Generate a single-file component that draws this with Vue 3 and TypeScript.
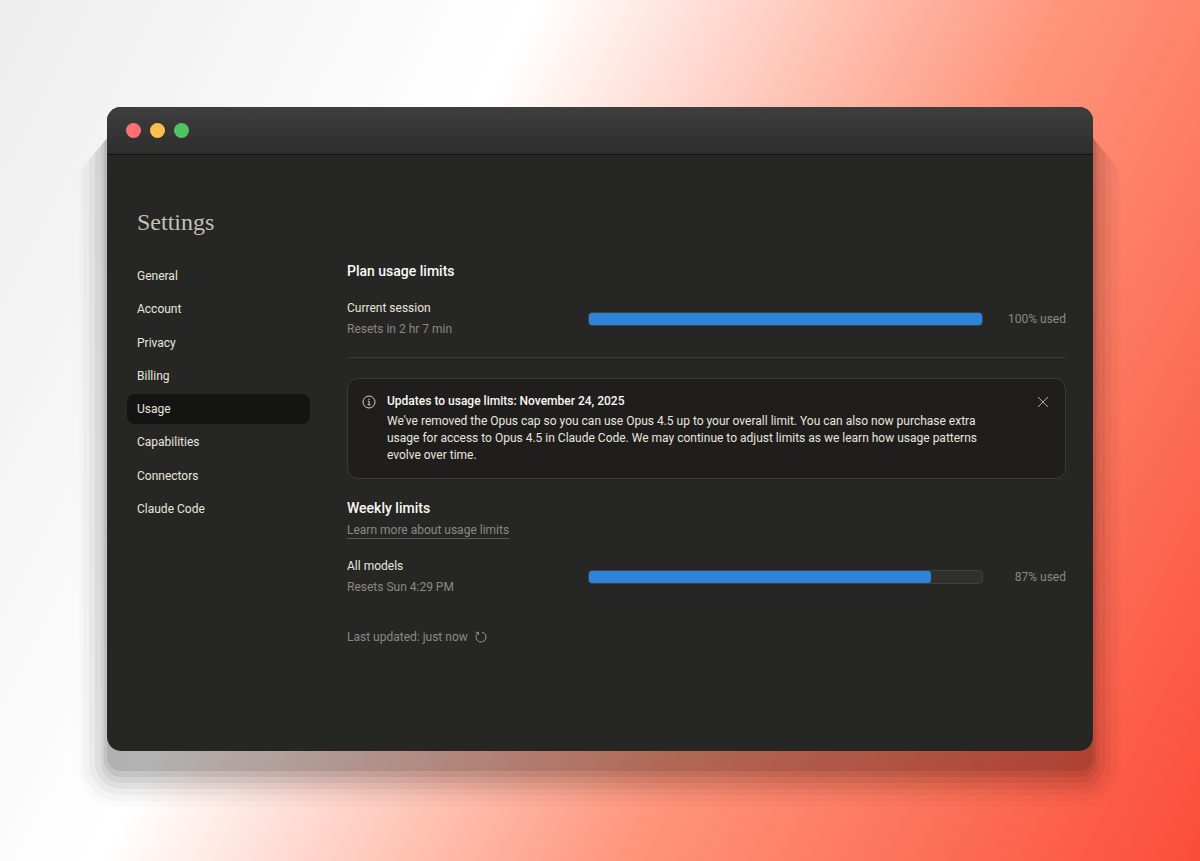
<script setup lang="ts">
import { ref } from 'vue'

interface Limit {
  name: string
  resets: string
  used: number
}

const sections = [
  'General',
  'Account',
  'Privacy',
  'Billing',
  'Usage',
  'Capabilities',
  'Connectors',
  'Claude Code',
]
const active = ref('Usage')
const noticeOpen = ref(true)

const session: Limit = { name: 'Current session', resets: 'Resets in 2 hr 7 min', used: 100 }
const weekly: Limit = { name: 'All models', resets: 'Resets Sun 4:29 PM', used: 87 }
</script>

<template>
  <div class="page">
    <div class="window">
      <header class="titlebar">
        <button class="dot close" type="button" aria-label="Close window"></button>
        <button class="dot minimize" type="button" aria-label="Minimize window"></button>
        <button class="dot expand" type="button" aria-label="Expand window"></button>
      </header>

      <div class="content">
        <h1>Settings</h1>
        <div class="columns">
          <nav class="nav" aria-label="Settings">
            <a
              v-for="section in sections"
              :key="section"
              href="#"
              :class="{ active: section === active }"
              :aria-current="section === active ? 'page' : undefined"
              @click.prevent="active = section"
              >{{ section }}</a
            >
          </nav>

          <main class="main">
            <h2>Plan usage limits</h2>
            <div class="limit">
              <div>
                <p class="name">{{ session.name }}</p>
                <p class="muted">{{ session.resets }}</p>
              </div>
              <div class="track" role="progressbar" :aria-label="session.name" :aria-valuenow="session.used">
                <div class="fill" :style="{ width: session.used + '%' }"></div>
              </div>
              <p class="muted amount">{{ session.used }}% used</p>
            </div>

            <hr />

            <section v-if="noticeOpen" class="notice">
              <svg class="info" viewBox="0 0 14 14" aria-hidden="true">
                <circle cx="7" cy="7" r="6" />
                <path d="M5.8 6.2H7.1V9.7M5.6 9.8H8.5" />
                <circle class="point" cx="7" cy="4.2" r="0.7" />
              </svg>
              <div class="notice-text">
                <h3>Updates to usage limits: November 24, 2025</h3>
                <p>
                  We've removed the Opus cap so you can use Opus 4.5 up to your overall limit. You can also now
                  purchase extra usage for access to Opus 4.5 in Claude Code. We may continue to adjust limits as we
                  learn how usage patterns evolve over time.
                </p>
              </div>
              <button class="dismiss" type="button" aria-label="Dismiss" @click="noticeOpen = false">
                <svg viewBox="0 0 12 12" aria-hidden="true"><path d="M1 1L11 11M11 1L1 11" /></svg>
              </button>
            </section>

            <h2>Weekly limits</h2>
            <p class="learn"><a href="#">Learn more about usage limits</a></p>
            <div class="limit weekly">
              <div>
                <p class="name">{{ weekly.name }}</p>
                <p class="muted">{{ weekly.resets }}</p>
              </div>
              <div class="track" role="progressbar" :aria-label="weekly.name" :aria-valuenow="weekly.used">
                <div class="fill" :style="{ width: weekly.used + '%' }"></div>
              </div>
              <p class="muted amount">{{ weekly.used }}% used</p>
            </div>

            <div class="updated">
              <span>Last updated: just now</span>
              <button class="refresh" type="button" aria-label="Refresh">
                <svg viewBox="0 0 12 12" aria-hidden="true">
                  <path d="M0.8 1.3H3.5V4" />
                  <path d="M3.3 1.8A5 5 0 1 0 7 1.1" />
                </svg>
              </button>
            </div>
          </main>
        </div>
      </div>
    </div>
  </div>
</template>

<style>
body {
  margin: 0;
}
</style>

<style scoped>
.page {
  box-sizing: border-box;
  min-height: 100vh;
  padding: 107px 107px 110px;
  isolation: isolate;
  background: linear-gradient(117deg, #ededed 0%, #ffffff 33%, #fe957b 65%, #fb4d39 100%);
  font-family: Roboto, 'Liberation Sans', sans-serif;
  font-size: 12px;
  line-height: 20px;
  color: #e8e6dc;
}

.window {
  position: relative;
  border-radius: 14px;
  background: #262624;
}

.window::before {
  content: '';
  position: absolute;
  z-index: -1;
  inset: 0;
  border-radius: 14px;
  box-shadow:
    0 20px 0 0 rgba(0, 0, 0, 0.09),
    0 23px 0 3px rgba(0, 0, 0, 0.07),
    0 26px 0 6px rgba(0, 0, 0, 0.055),
    0 26px 0 12px rgba(0, 0, 0, 0.05),
    0 26px 0 18px rgba(0, 0, 0, 0.035),
    0 26px 0 24px rgba(0, 0, 0, 0.025),
    0 28px 0 28px rgba(0, 0, 0, 0.015);
  clip-path: polygon(
    0 31px,
    -32px 70px,
    -32px 110%,
    calc(100% + 32px) 110%,
    calc(100% + 32px) 70px,
    100% 31px
  );
}

.titlebar {
  display: flex;
  align-items: center;
  gap: 9px;
  height: 47px;
  padding: 0 19px;
  border-bottom: 1px solid #141414;
  border-radius: 14px 14px 0 0;
  background: linear-gradient(#3e3e3e, #2d2d2d);
}

.dot {
  width: 15px;
  height: 15px;
  padding: 0;
  border: 0;
  border-radius: 50%;
}

.close {
  background: #ff7074;
}

.minimize {
  background: #ffbf4a;
}

.expand {
  background: #50c462;
}

.content {
  padding: 53px 27px 104px 20px;
}

h1,
h2,
h3,
p {
  margin: 0;
}

h1 {
  padding-left: 10px;
  font-family: 'Liberation Serif', serif;
  font-size: 24px;
  font-weight: 400;
  line-height: 28px;
  color: #c3c0b6;
}

.columns {
  display: grid;
  grid-template-columns: 183px minmax(0, 1fr);
  gap: 37px;
  align-items: start;
  margin-top: 25px;
}

.nav {
  display: flex;
  flex-direction: column;
  justify-content: space-between;
  height: 263px;
}

.nav a {
  padding: 5px 10px;
  border-radius: 8px;
  color: inherit;
  text-decoration: none;
}

.nav .active {
  background: #141413;
}

h2 {
  font-size: 14px;
  font-weight: 500;
  color: #faf9f5;
}

.limit {
  display: grid;
  grid-template-columns: 241px minmax(0, 1fr) 83px;
  align-items: center;
  margin-top: 17px;
}

.weekly {
  margin-top: 16px;
}

.name {
  margin-bottom: 1px;
}

.muted {
  color: #8b8982;
}

.amount {
  text-align: right;
}

.track {
  box-sizing: border-box;
  height: 14px;
  border: 1px solid #41403d;
  border-radius: 4px;
  background: #30302e;
}

.fill {
  height: 100%;
  border-radius: 3px;
  background: #2c84db;
}

hr {
  height: 1px;
  margin: 18px 0 20px;
  border: 0;
  background: #3b3a37;
}

.notice {
  display: flex;
  align-items: flex-start;
  margin-bottom: 19px;
  padding: 12px 16px 14px 14px;
  border: 1px solid #3b3a37;
  border-radius: 11px;
  background: #1f1e1c;
}

.info {
  flex: none;
  width: 14px;
  height: 14px;
  margin: 4px 11px 0 0;
  fill: none;
  stroke: #d6d4ca;
  stroke-width: 1;
}

.info .point {
  fill: #d6d4ca;
  stroke: none;
}

.notice-text {
  flex: 1;
}

h3 {
  margin-bottom: 2px;
  font-size: 12px;
  font-weight: 500;
  color: #faf9f5;
}

.notice-text p {
  max-width: 610px;
  line-height: 17px;
}

button {
  cursor: pointer;
}

.dismiss,
.refresh {
  display: flex;
  padding: 0;
  border: 0;
  background: none;
}

.dismiss {
  margin-top: 5px;
}

.dismiss svg,
.refresh svg {
  width: 12px;
  height: 12px;
  fill: none;
  stroke: #b0aea5;
  stroke-width: 1;
}

.refresh svg {
  stroke: #96948c;
}

.learn {
  margin-top: 2px;
}

.learn a {
  color: #8b8982;
  text-decoration: underline;
  text-decoration-color: #5a5954;
  text-underline-offset: 4px;
}

.updated {
  display: flex;
  align-items: center;
  gap: 7px;
  margin-top: 30px;
  color: #8b8982;
}
</style>
